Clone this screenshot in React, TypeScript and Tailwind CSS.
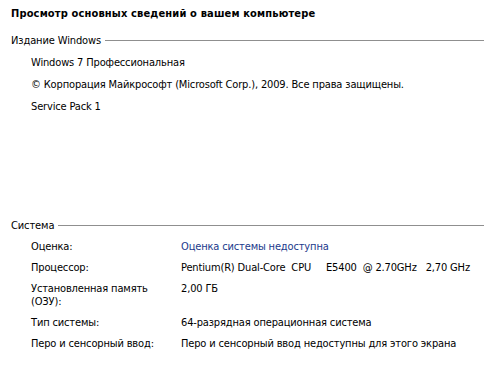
import React from "react";

const font = { fontFamily: '"DejaVu Sans Condensed", Tahoma, "DejaVu Sans", sans-serif' };

function SectionHeader({ title }: { title: string }) {
  return (
    <div className="flex items-center pl-[11px] h-[13px]">
      <span className="text-[11px] leading-[13px] tracking-[-0.12px] text-black">{title}</span>
      <div className="flex-1 ml-[4px] mr-[1px] h-0 border-t border-[#8f8f8f]" />
    </div>
  );
}

function Row({ label, value, link }: { label: React.ReactNode; value: React.ReactNode; link?: boolean }) {
  return (
    <div className="flex">
      <div className="w-[150px] shrink-0 text-black">{label}</div>
      <div className={link ? "text-[#1b3a8c]" : "text-black"}>{value}</div>
    </div>
  );
}

export default function App() {
  return (
    <div className="w-[485px] h-[365px] bg-white overflow-hidden" style={font}>
      <div className="pt-[7px] pl-[11px] text-[11px] leading-[13px] font-bold tracking-[0.15px] text-black">
        Просмотр основных сведений о вашем компьютере
      </div>
      <div className="mt-[14px]">
        <SectionHeader title="Издание Windows" />
      </div>
      <div className="pl-[31px] mt-[9px] flex flex-col gap-[9px] text-[11px] leading-[13px] tracking-[-0.15px] text-black">
        <div>Windows 7 Профессиональная</div>
        <div>© Корпорация Майкрософт (Microsoft Corp.), 2009. Все права защищены.</div>
        <div>Service Pack 1</div>
      </div>
      <div className="mt-[106px]">
        <SectionHeader title="Система" />
      </div>
      <div className="pl-[31px] mt-[8px] flex flex-col gap-[8px] text-[11px] leading-[13px] tracking-[-0.15px] whitespace-pre">
        <Row label="Оценка:" value="Оценка системы недоступна" link />
        <Row label="Процессор:" value="Pentium(R) Dual-Core  CPU     E5400  @ 2.70GHz   2,70 GHz" />
        <Row
          label={
            <>
              Установленная память
              <br />
              (ОЗУ):
            </>
          }
          value="2,00 ГБ"
        />
        <Row label="Тип системы:" value="64-разрядная операционная система" />
        <Row label="Перо и сенсорный ввод:" value="Перо и сенсорный ввод недоступны для этого экрана" />
      </div>
    </div>
  );
}
